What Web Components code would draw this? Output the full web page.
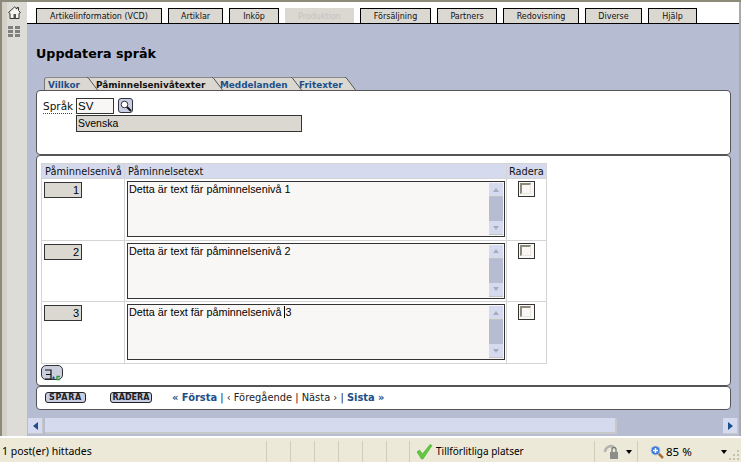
<!DOCTYPE html>
<html lang="sv">
<head>
<meta charset="utf-8">
<title>Uppdatera språk</title>
<style>
  html, body { margin: 0; padding: 0; height: 462px; overflow: hidden; }
  body { font-family: "DejaVu Sans", sans-serif; background: #ece9d8; }
</style>
</head>
<body>
<app-shell>
  <menu-tab slot="menu" style="width:124px">Artikelinformation (VCD)</menu-tab>
  <menu-tab slot="menu" style="width:53px">Artiklar</menu-tab>
  <menu-tab slot="menu" style="width:48px">Inköp</menu-tab>
  <menu-tab slot="menu" style="width:67px" disabled>Produktion</menu-tab>
  <menu-tab slot="menu" style="width:69px">Försäljning</menu-tab>
  <menu-tab slot="menu" style="width:58px">Partners</menu-tab>
  <menu-tab slot="menu" style="width:74px">Redovisning</menu-tab>
  <menu-tab slot="menu" style="width:55px">Diverse</menu-tab>
  <menu-tab slot="menu" style="width:47px">Hjälp</menu-tab>

  <h-title slot="content">Uppdatera språk</h-title>

  <tab-strip slot="content">
    <sub-tab style="width:43px;--pad:3px">Villkor</sub-tab>
    <sub-tab style="width:125px;--pad:8px" active>Påminnelsenivåtexter</sub-tab>
    <sub-tab style="width:79px;--pad:7px">Meddelanden</sub-tab>
    <sub-tab style="width:54px;--pad:7px">Fritexter</sub-tab>
  </tab-strip>

  <round-panel slot="content" style="height:63px">
    <lang-form></lang-form>
  </round-panel>

  <round-panel slot="content" style="height:229px">
    <reminder-table>
      <reminder-row level="1">Detta är text fär påminnelsenivå 1</reminder-row>
      <reminder-row level="2">Detta är text fär påminnelsenivå 2</reminder-row>
      <reminder-row level="3">Detta är text fär påminnelsenivå <span style="border-left:1px solid #000">3</span></reminder-row>
    </reminder-table>
  </round-panel>

  <round-panel slot="content" style="height:22px">
    <pager-bar></pager-bar>
  </round-panel>
</app-shell>

<script>
class AppShell extends HTMLElement {
  constructor () {
    super();
    this.attachShadow({mode: 'open'});
    this.shadowRoot.innerHTML = `
      <style>
        :host { display: flex; flex-direction: column; width: 741px; height: 462px; }
        .top { height: 2px; background: #8c8a78; flex: none; }
        .middle { display: flex; height: 434px; flex: none; }
        .edge { width: 2px; background: #8c8a78; flex: none; }
        .side { width: 25px; background: #dedcd6; border-left: 5px solid #d4d0c8; display: flex; flex-direction: column; align-items: flex-start; padding: 4px 0 0 1px; gap: 7px; flex: none; box-sizing: border-box; }
        .main { flex: 1; display: flex; flex-direction: column; min-width: 0; background: #b6bcd2; border-right: 2px solid #aaa; }
        .menu { height: 21px; background: #fff; border-bottom: 1px solid #000; display: flex; align-items: flex-end; padding-left: 9px; gap: 6px; flex: none; }
        .content { flex: 1; padding: 0 8px 0 9px; display: flex; flex-direction: column; }
        svg { display: block; }
      </style>
      <div class="top"></div>
      <div class="middle">
        <div class="edge"></div>
        <div class="side">
          <svg width="13" height="13" viewBox="0 0 13 13">
            <path d="M6.5 1 L0.5 6.5 L2 7.5 L2 12.5 L11 12.5 L11 7.5 L12.5 6.5 L10.5 4.5 L10.5 1.5 L9 1.5 L9 3 Z" fill="#f6f5ef" stroke="#333" stroke-width="1"/>
            <rect x="5.5" y="8" width="2.5" height="4.5" fill="#555"/>
          </svg>
          <svg width="12" height="12" viewBox="0 0 12 12" fill="#808080">
            <rect x="0" y="0" width="5" height="3"/><rect x="7" y="0" width="5" height="3"/>
            <rect x="0" y="4" width="5" height="3"/><rect x="7" y="4" width="5" height="3"/>
            <rect x="0" y="8" width="5" height="3"/><rect x="7" y="8" width="5" height="3"/>
          </svg>
        </div>
        <div class="main">
          <div class="menu"><slot name="menu"></slot></div>
          <div class="content"><slot name="content"></slot></div>
          <h-scroll></h-scroll>
        </div>
      </div>
      <status-bar></status-bar>
    `;
  }
}

class MenuTab extends HTMLElement {
  constructor () {
    super();
    this.attachShadow({mode: 'open'});
    this.shadowRoot.innerHTML = `
      <style>
        :host {
          display: block; height: 14px; box-sizing: content-box;
          background: #dbd8d1; border: 1px solid #000; border-bottom: 0;
          font: 8px/15px "DejaVu Sans", sans-serif; color: #111; text-align: center; white-space: nowrap;
        }
        :host([disabled]) { border-color: #dbd8d1; color: #c4c2bc; }
      </style>
      <slot></slot>
    `;
  }
}

class HTitle extends HTMLElement {
  constructor () {
    super();
    this.attachShadow({mode: 'open'});
    this.shadowRoot.innerHTML = `
      <style>
        :host { display: block; height: 53px; padding-top: 21px; box-sizing: border-box; font: bold 12.7px/17px "DejaVu Sans", sans-serif; color: #000; }
      </style>
      <slot></slot>
    `;
  }
}

class TabStrip extends HTMLElement {
  constructor () {
    super();
    this.attachShadow({mode: 'open'});
    this.shadowRoot.innerHTML = `
      <style>
        :host { display: flex; height: 13px; padding-left: 8px; }
      </style>
      <slot></slot>
    `;
  }
}

class SubTab extends HTMLElement {
  constructor () {
    super();
    this.attachShadow({mode: 'open'});
    this.shadowRoot.innerHTML = `
      <style>
        :host { display: block; height: 13px; flex: none; box-sizing: border-box; position: relative;
          font: bold 8.9px/14px "DejaVu Sans", sans-serif; color: #1d4f8b; white-space: nowrap;
          background: #dbd8d1; border-top: 1px solid #888; border-left: 1px solid #777; border-top-left-radius: 3px; padding-left: var(--pad, 3px); }
        :host([active]) { color: #111; }
        svg { position: absolute; right: -11px; top: -1px; z-index: 1; }
      </style>
      <slot></slot>
      <svg width="11" height="13" viewBox="0 0 11 13"><path d="M0 0 L1 0 L11 13 L0 13 Z" fill="#dbd8d1"/><path d="M0 0.5 L1 0.5 L10.5 13" fill="none" stroke="#555"/></svg>
    `;
  }
}

class RoundPanel extends HTMLElement {
  constructor () {
    super();
    this.attachShadow({mode: 'open'});
    this.shadowRoot.innerHTML = `
      <style>
        :host { display: block; flex: none; box-sizing: content-box; background: #fff; border: 1px solid #555; border-radius: 4px; font-family: "DejaVu Sans", sans-serif; width: 693px; position: relative; z-index: 2; }
      </style>
      <slot></slot>
    `;
  }
}

class LangForm extends HTMLElement {
  constructor () {
    super();
    this.attachShadow({mode: 'open'});
    this.shadowRoot.innerHTML = `
      <style>
        :host { display: grid; grid-template-columns: 33px auto; padding: 7px 0 0 6px; font: 11px "Liberation Sans", sans-serif; }
        .label { font: 10.5px/14px "DejaVu Sans", sans-serif; color: #111; border-bottom: 1px dotted #1d4f8b; height: 14px; width: 29px; margin-top: 1px; }
        .row { display: flex; gap: 4px; align-items: flex-start; }
        .code { box-sizing: border-box; width: 38px; height: 16px; border: 1px solid #333; background: #f8f7f5; line-height: 14px; padding-left: 1px; font-size: 11.5px; color: #000; }
        .btn { box-sizing: border-box; width: 15px; height: 15px; border: 1px solid #334; border-radius: 3px; background: #c9cee2; display: flex; align-items: center; justify-content: center; }
        .name { box-sizing: border-box; grid-column: 2; width: 226px; height: 17px; margin-top: 1px; border: 1px solid #333; background: #dbd8d1; line-height: 15px; padding-left: 1px; font-size: 10.5px; color: #000; }
      </style>
      <div class="label">Språk</div>
      <div class="row">
        <div class="code">SV</div>
        <div class="btn">
          <svg width="12" height="12" viewBox="0 0 12 12"><circle cx="4.5" cy="4.5" r="3.3" fill="#fff" stroke="#333"/><path d="M7 7 L11 11" stroke="#111" stroke-width="2"/></svg>
        </div>
      </div>
      <div class="name">Svenska</div>
    `;
  }
}

class ReminderTable extends HTMLElement {
  constructor () {
    super();
    this.attachShadow({mode: 'open'});
    this.shadowRoot.innerHTML = `
      <style>
        :host { display: block; padding: 7px 0 0 4px; }
        .head { display: grid; grid-template-columns: 83px 382px 39px; width: 506px; height: 16px; box-sizing: border-box; background: #d5daee; border: 1px solid #d4d4d4;
          font: 9.8px/15px "DejaVu Sans", sans-serif; color: #111; }
        .head div { padding-left: 3px; white-space: nowrap; overflow: hidden; border-right: 1px solid #d4d4d4; box-sizing: border-box; }
        .head div:last-child { border-right: 0; padding-left: 2px; }
        .add { display: block; margin-top: 1px; box-sizing: border-box; width: 22px; height: 15px; border: 1px solid #333; border-radius: 5px; background: #ccd0de; }
      </style>
      <div class="head"><div>Påminnelsenivå</div><div>Påminnelsetext</div><div>Radera</div></div>
      <slot></slot>
      <div class="add">
        <svg width="20" height="13" viewBox="0 0 20 13"><path d="M3 2 H9 V11 H3 M4 6.5 H9" fill="none" stroke="#111" stroke-width="1.2"/><path d="M10 10 H13 M11.5 8.5 V11.5" stroke="#1d4f8b" stroke-width="1.2"/><path d="M18 8.5 H15 V11.5 H18" fill="none" stroke="#2a9a3a" stroke-width="1.3"/></svg>
      </div>
    `;
  }
}

class ReminderRow extends HTMLElement {
  constructor () {
    super();
    this.attachShadow({mode: 'open'});
    const level = this.getAttribute('level');
    this.shadowRoot.innerHTML = `
      <style>
        :host { display: grid; grid-template-columns: 83px 382px 39px; width: 506px; height: 61.67px; box-sizing: border-box; border: 1px solid #d4d4d4; border-top: 0; }
        .cell { border-right: 1px solid #d4d4d4; box-sizing: border-box; }
        .cell:last-child { border-right: 0; }
        .lvl { padding: 3px 0 0 2px; }
        .num { box-sizing: border-box; width: 38px; height: 16px; background: #dbd8d1; border: 1px solid #333; text-align: right; padding-right: 2px; font: 11px/14px "Liberation Sans", sans-serif; color: #000; }
        .txt { padding: 2px 0 0 2px; }
        .area { box-sizing: border-box; width: 378px; height: 56px; display: flex; background: #f8f7f5; border: 1px solid #333; font: 10.8px/14px "Liberation Sans", sans-serif; color: #000; }
        .value { flex: 1; padding: 0 1px; }
        .bar { width: 14px; margin: 1px 1px 0 0; height: 52px; background: #b6bcd2; display: flex; flex-direction: column; justify-content: space-between; }
        .arrow { height: 13px; background: #d5daee; border-bottom: 1px solid #c4c4c4; display: flex; align-items: center; justify-content: center; }
        .arrow i { display: block; width: 0; height: 0; border: 3px solid transparent; }
        .up i { border-bottom: 4px solid #aab; border-top: 0; }
        .dn i { border-top: 4px solid #aab; border-bottom: 0; }
        .chk { display: flex; justify-content: center; padding-top: 2px; }
        .box { box-sizing: border-box; width: 17px; height: 16px; border: 1px solid #333; background: #f8f7f5; padding: 1px; }
        .box div { box-sizing: border-box; width: 11px; height: 11px; border: 2px solid #8c8a78; border-right: 1px solid #e8e6da; border-bottom: 1px solid #e8e6da; }
      </style>
      <div class="cell lvl"><div class="num">${level}</div></div>
      <div class="cell txt">
        <div class="area">
          <div class="value"><slot></slot></div>
          <div class="bar"><div class="arrow up"><i></i></div><div class="arrow dn"><i></i></div></div>
        </div>
      </div>
      <div class="cell chk"><div class="box"><div></div></div></div>
    `;
  }
}

class PagerBar extends HTMLElement {
  constructor () {
    super();
    this.attachShadow({mode: 'open'});
    this.shadowRoot.innerHTML = `
      <style>
        :host { display: flex; align-items: center; height: 21px; padding: 0 0 0 8px; box-sizing: border-box; font: 9.9px "DejaVu Sans", sans-serif; color: #222; white-space: nowrap; }
        .btn { box-sizing: border-box; height: 11px; border: 1px solid #222; border-radius: 3px; background: #c9cee2; font: bold 8px/9px "DejaVu Sans", sans-serif; text-align: center; letter-spacing: .7px; }
        .save { width: 41px; margin-right: 24px; }
        .del { width: 42px; margin-right: 20px; letter-spacing: 0; }
        b { color: #1d4f8b; font-weight: bold; }
      </style>
      <div class="btn save">SPARA</div>
      <div class="btn del">RADERA</div>
      <span><b>« Första</b> | ‹ Föregående | Nästa › | <b>Sista »</b></span>
    `;
  }
}

class HScroll extends HTMLElement {
  constructor () {
    super();
    this.attachShadow({mode: 'open'});
    this.shadowRoot.innerHTML = `
      <style>
        :host { display: flex; height: 16px; margin: 0 1px 2px 1px; flex: none; }
        .btn { width: 15px; background: #d5daee; border-right: 1px solid #c8c8c8; border-bottom: 1px solid #c8c8c8; display: flex; align-items: center; justify-content: center; box-sizing: border-box; }
        .l i { border-right: 5px solid #1d4f8b; border-left: 0; }
        .r i { border-left: 5px solid #1d4f8b; border-right: 0; }
        i { display: block; width: 0; height: 0; border-top: 4px solid transparent; border-bottom: 4px solid transparent; }
        .thumb { width: 572px; margin-left: 2px; background: #d5daee; border-right: 2px solid #c8c8c8; border-bottom: 2px solid #c8c8c8; box-sizing: border-box; }
        .gap { flex: 1; }
      </style>
      <div class="btn l"><i></i></div>
      <div class="thumb"></div>
      <div class="gap"></div>
      <div class="btn r"><i></i></div>
    `;
  }
}

class StatusBar extends HTMLElement {
  constructor () {
    super();
    this.attachShadow({mode: 'open'});
    const blanks = [24, 24, 24, 24, 24, 23].map(w => `<div class="cell" style="width:${w}px"></div>`).join('');
    this.shadowRoot.innerHTML = `
      <style>
        :host { display: flex; flex: none; height: 26px; box-sizing: border-box; padding-top: 3px; background: #ece9d8; border-top: 2px solid #fff; font: 10.5px/21px "Noto Sans", sans-serif; color: #000; white-space: nowrap; position: relative; }
        .cell { box-sizing: border-box; border-right: 1px solid #d0cdbc; height: 21px; flex: none; display: flex; align-items: center; }
        .msg { width: 267px; padding-left: 2px; }
        .trust { width: 185px; padding-left: 6px; gap: 3px; font-size: 10px; }
        .sec { width: 43px; padding-left: 8px; gap: 7px; }
        .zoom { flex: 1; border-right: 0; padding-left: 12px; min-width: 0; font-size: 11.5px; }
        .caret { width: 0; height: 0; border: 3px solid transparent; border-top: 4px solid #000; border-bottom: 0; display: block; }
        .grip { position: absolute; right: 1px; bottom: 1px; }
      </style>
      <div class="cell msg">1 post(er) hittades</div>
      ${blanks}
      <div class="cell trust">
        <svg width="17" height="16" viewBox="0 0 17 16"><path d="M1 8 L3.5 6 L6.5 10 L14 0.5 L16 1.5 L7 15 L5.5 15 Z" fill="#5ecb3c" stroke="#3a9a28" stroke-width=".5"/></svg>
        Tillförlitliga platser
      </div>
      <div class="cell sec">
        <svg width="16" height="16" viewBox="0 0 16 16"><path d="M2 8 A6 6 0 0 1 11 3" fill="none" stroke="#b5b5b0" stroke-width="2.5"/><rect x="7" y="8" width="8" height="7" fill="#8c8c88"/><path d="M9 8 V5.5 A2 2 0 0 1 13 5.5 V8" fill="none" stroke="#777" stroke-width="1.3"/></svg>
        <span class="caret"></span>
      </div>
      <div class="cell zoom">
        <svg width="14" height="14" viewBox="0 0 14 14"><path d="M8.5 8.5 L13 13" stroke="#a5703a" stroke-width="2.5"/><circle cx="5.5" cy="5.5" r="4.5" fill="#3a7ad8" stroke="#b8c8e0"/><path d="M5.5 3 V8 M3 5.5 H8" stroke="#fff" stroke-width="1.5"/></svg>
        <span style="margin-left:2px">85 %</span>
        <span class="caret" style="margin-left:29px"></span>
      </div>
      <svg class="grip" width="11" height="11" viewBox="0 0 11 11" fill="#c4c1ae">
        <rect x="8" y="0" width="2" height="2"/>
        <rect x="4" y="4" width="2" height="2"/><rect x="8" y="4" width="2" height="2"/>
        <rect x="0" y="8" width="2" height="2"/><rect x="4" y="8" width="2" height="2"/><rect x="8" y="8" width="2" height="2"/>
      </svg>
    `;
  }
}

customElements.define('app-shell', AppShell);
customElements.define('menu-tab', MenuTab);
customElements.define('h-title', HTitle);
customElements.define('tab-strip', TabStrip);
customElements.define('sub-tab', SubTab);
customElements.define('round-panel', RoundPanel);
customElements.define('lang-form', LangForm);
customElements.define('reminder-table', ReminderTable);
customElements.define('reminder-row', ReminderRow);
customElements.define('pager-bar', PagerBar);
customElements.define('h-scroll', HScroll);
customElements.define('status-bar', StatusBar);
</script>
</body>
</html>
